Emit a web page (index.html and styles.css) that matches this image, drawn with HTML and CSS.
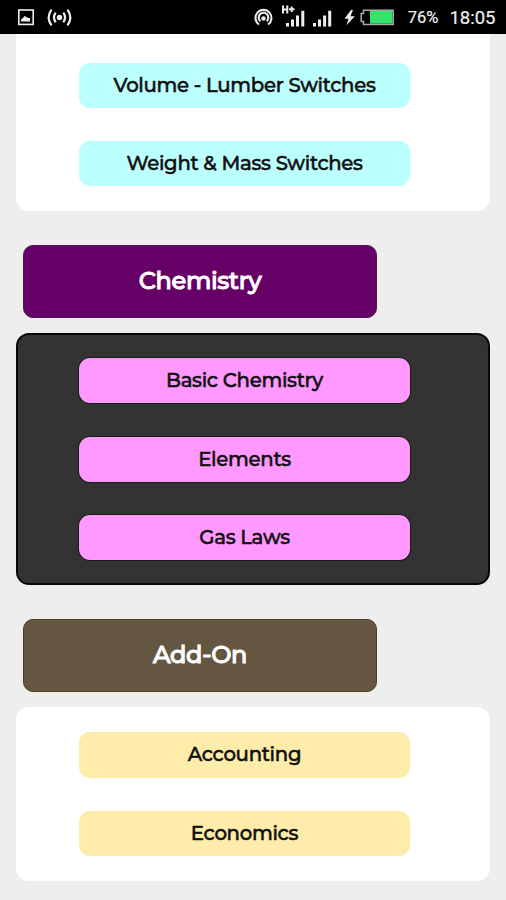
FILE: index.html
```html
<!DOCTYPE html>
<html lang="en">
<head>
    <meta charset="UTF-8">
    <meta name="viewport" content="width=device-width, initial-scale=1.0">
    <title>Switches</title>
    <link rel="stylesheet" href="styles.css">
</head>
<body>
    <header class="status-bar">
        <svg class="status-icons" width="506" height="34" viewBox="0 0 506 34" fill="none" stroke="#eee">
            <!-- Picture -->
            <rect x="18.8" y="10" width="14.4" height="14.4" stroke-width="1.6"/>
            <path d="M21 21.500v-2l2-1.500 1.500-2 2 1 1.500 1h2v3.500z" fill="#eee" stroke="none"/>
            <!-- Broadcast -->
            <circle cx="59.500" cy="17.500" r="2.700" fill="#eee" stroke="none"/>
            <path d="M55.700 12.700q-3.600 4.800 0 9.600M63.300 12.700q3.600 4.800 0 9.600M51.500 9.600q-5.600 7.900 0 15.800M67.500 9.600q5.600 7.900 0 15.800" stroke-width="2.200"/>
            <!-- Hotspot -->
            <path d="M259 24.500a8 8 0 1 1 9 0M260.300 21.200a4.800 4.800 0 1 1 6.400 0" stroke-width="2.100"/>
            <circle cx="263.500" cy="18.500" r="2.200" fill="#eee" stroke="none"/>
            <!-- H+ -->
            <path d="M283 5.500v8M287.300 5.500v8M283 9.500h4.300M289 9.300h5.500M291.700 6.500v5.600" stroke-width="2"/>
            <!-- Signal -->
            <path d="M287.500 23v3.500M292.500 19.500v7M297.500 15.500v11M302.800 10.800v15.700" stroke-width="3"/>
            <path d="M314.500 23v3.500M319.500 19.500v7M324.600 15.500v11M329.700 10.800v15.700" stroke-width="3"/>
            <!-- Charging battery -->
            <path d="M351 10l-6.500 8.700h4l-2 6.500 8.300-9h-4.300l2.500-6.200z" fill="#eee" stroke="none"/>
            <path d="M363.500 10.200h29.700v14.200h-29.700v-3h-2.300v-8h2.300z" stroke="#aaa" stroke-width="1.500"/>
            <rect x="370" y="11" width="22.500" height="12.700" fill="#33e36c" stroke="none"/>
        </svg>
        <span class="battery">76%</span>
        <span class="clock">18:05</span>
    </header>
    <main>
        <section class="panel panel-light panel-cut">
            <a class="btn btn-cyan">Volume - Lumber Switches</a>
            <a class="btn btn-cyan">Weight &amp; Mass Switches</a>
        </section>

        <h2 class="title title-chemistry">Chemistry</h2>
        <section class="panel panel-dark">
            <a class="btn btn-pink">Basic Chemistry</a>
            <a class="btn btn-pink">Elements</a>
            <a class="btn btn-pink">Gas Laws</a>
        </section>

        <h2 class="title title-addon">Add-On</h2>
        <section class="panel panel-light">
            <a class="btn btn-yellow">Accounting</a>
            <a class="btn btn-yellow">Economics</a>
        </section>
    </main>
</body>
</html>
```
FILE: styles.css
```css
* {
    box-sizing: border-box;
}
body {
    margin: 0;
    height: 900px;
    overflow: hidden;
    background-color: #eeeeee;
    font-family: Montserrat, Inter, sans-serif;
}
.status-bar {
    position: relative;
    height: 34px;
    background-color: #000;
    color: #eee;
    font-family: Roboto, sans-serif;
    display: flex;
    justify-content: flex-end;
    align-items: center;
    gap: 11px;
    padding: 1px 10.5px 0 0;
}
.status-icons {
    position: absolute;
    left: 0;
    top: 0;
}
.battery {
    font-size: 16.5px;
    -webkit-text-stroke: 0.2px #eee;
}
.clock {
    font-size: 18.5px;
    -webkit-text-stroke: 0.2px #eee;
}
main {
    padding: 0 16px;
}
.panel {
    width: 474px;
    padding: 25px 0 25px 63px;
    border-radius: 13px;
    display: flex;
    flex-direction: column;
    gap: 33.5px;
}
.panel-light {
    background-color: #fff;
}
.panel-cut {
    padding-top: 28.5px;
    border-radius: 0 0 13px 13px;
}
.panel-dark {
    background-color: #333;
    border: 2px solid #080808;
    padding: 22.5px 0 23px 61px;
}
.btn {
    width: 331px;
    height: 45.2px;
    border-radius: 11px;
    color: #101010;
    font-size: 19.7px;
    font-weight: 500;
    letter-spacing: -0.3px;
    line-height: 45px;
    text-align: center;
    white-space: nowrap;
    -webkit-text-stroke: 0.5px #101010;
}
.btn-cyan {
    background-color: #bbffff;
}
.btn-pink {
    background-color: #ff99ff;
    box-shadow: 0 0 0 1px #142014;
}
.btn-yellow {
    background-color: #fdecaa;
}
.title {
    width: 354px;
    height: 73px;
    margin: 34px 0 15px 7px;
    border-radius: 10px;
    color: #fff;
    font-size: 24px;
    font-weight: 500;
    letter-spacing: -0.3px;
    line-height: 69px;
    text-align: center;
    -webkit-text-stroke: 1px #fff;
}
.title-chemistry {
    background-color: #660066;
    border: 1px solid #551055;
}
.title-addon {
    background-color: #645640;
    border: 1px solid #4d4020;
}
```
